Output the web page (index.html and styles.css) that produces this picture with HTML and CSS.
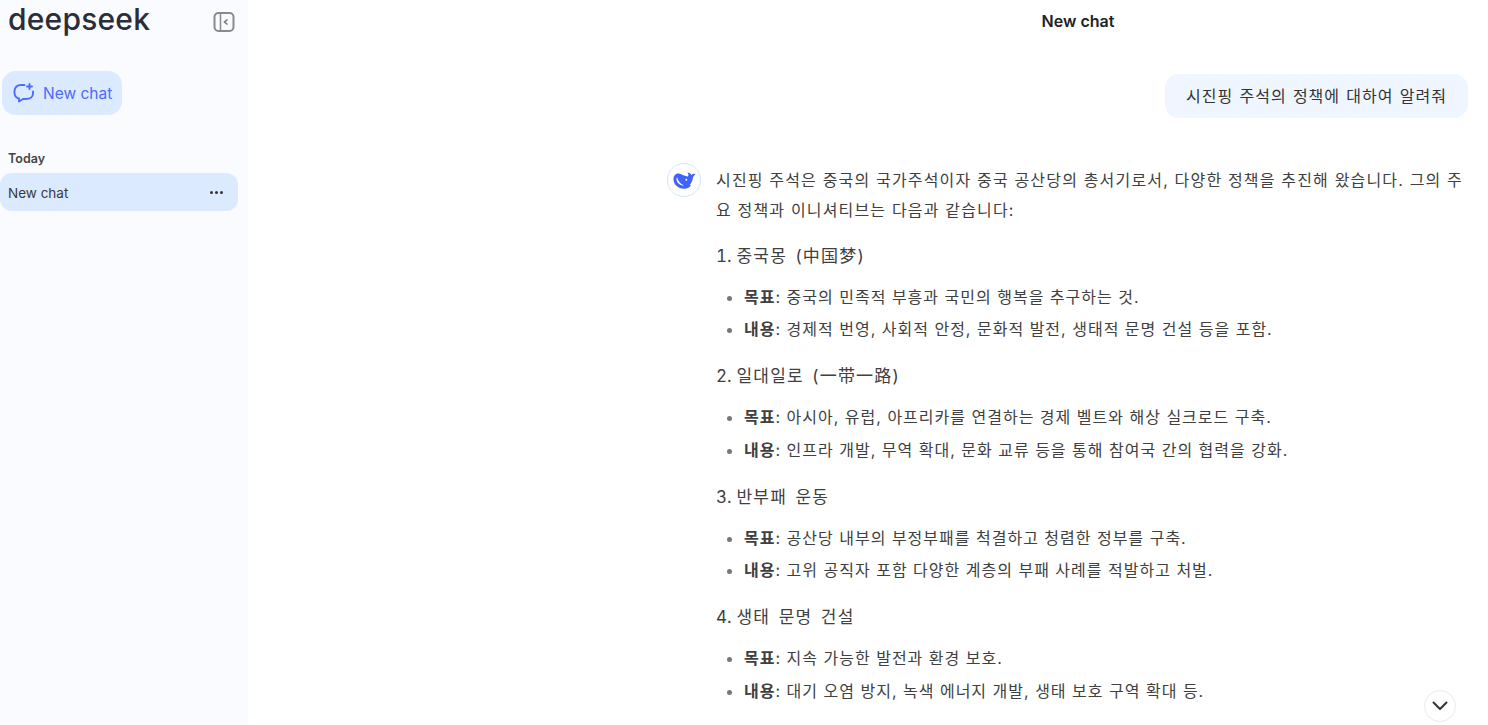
FILE: index.html
```html
<!DOCTYPE html>
<html lang="ko">
<head>
    <meta charset="UTF-8">
    <meta name="viewport" content="width=device-width, initial-scale=1.0">
    <title>DeepSeek - New chat</title>
    <link rel="stylesheet" href="styles.css">
</head>
<body>
    <div class="app">
        <aside class="sidebar">
            <div class="sidebar-top">
                <span class="logo">deepseek</span>
                <svg class="collapse-icon" width="22" height="22" viewBox="0 0 22 22" fill="none" stroke="#8a8a8e" stroke-width="2">
                    <rect x="1.5" y="2" width="19" height="18" rx="4"/>
                    <path d="M7.5 2v18" stroke-width="1.5"/>
                    <path d="M14.5 8.5L11.5 11l3 2.5" stroke-width="1.6" stroke="#77777b"/>
                </svg>
            </div>
            <button class="new-chat">
                <svg width="22" height="22" viewBox="0 0 22 22" fill="none" stroke="#4d6bfe" stroke-width="1.9" stroke-linecap="round" stroke-linejoin="round">
                    <path d="M11.500 3H8C4 3 1.500 5.500 1.500 9v1.500C1.500 14 3.500 16 6 16.500v3l4-2.500h3c4 0 7-2 7-5.500v-2"/>
                    <path d="M16.500 2v5M14 4.500h5"/>
                </svg>
                <span>New chat</span>
            </button>
            <div class="history-label">Today</div>
            <div class="history-item">
                <span>New chat</span>
                <span class="dots"><i></i><i></i><i></i></span>
            </div>
        </aside>
        <main class="main">
            <header class="chat-title">New chat</header>
            <div class="thread">
                <div class="user-row">
                    <div class="user-bubble">시진핑 주석의 정책에 대하여 알려줘</div>
                </div>
                <div class="answer">
                    <div class="avatar">
                        <svg width="23" height="17" viewBox="0 0 23 17">
                            <path fill="#3f62fb" d="M.5 7C.5 3.500 3 1 6 1.500c3 .5 5.500 3 9 3 .8-1.400.4-2.800-.6-4 2 .2 3.400 1.200 4 2.400 1-.8 2.400-1.200 4.100-1-.9 1-1.800 1.900-2.400 3.100-.3 4-2.500 7.200-3.600 8.300h1.800C16.500 15.800 14 16.700 11 16.700 4.800 16.700.5 12.300.5 7z"/>
                            <path fill="#fff" d="M4.200 5.500c.6 3.200 3 6.300 6.800 8-3.200.4-6.400-2.200-7.300-5-.4-1.400-.1-3.400.5-3z"/>
                            <circle fill="#fff" cx="13.300" cy="7.800" r="1"/>
                        </svg>
                    </div>
                    <div class="answer-body">
                        <p class="intro">시진핑 주석은 중국의 국가주석이자 중국 공산당의 총서기로서, 다양한 정책을 추진해 왔습니다. 그의 주요 정책과 이니셔티브는 다음과 같습니다:</p>

                        <h3><span class="num">1. </span>중국몽 (中国梦)</h3>
                        <ul>
                            <li><b>목표</b>: 중국의 민족적 부흥과 국민의 행복을 추구하는 것.</li>
                            <li><b>내용</b>: 경제적 번영, 사회적 안정, 문화적 발전, 생태적 문명 건설 등을 포함.</li>
                        </ul>

                        <h3><span class="num">2. </span>일대일로 (一带一路)</h3>
                        <ul>
                            <li><b>목표</b>: 아시아, 유럽, 아프리카를 연결하는 경제 벨트와 해상 실크로드 구축.</li>
                            <li><b>내용</b>: 인프라 개발, 무역 확대, 문화 교류 등을 통해 참여국 간의 협력을 강화.</li>
                        </ul>

                        <h3><span class="num">3. </span>반부패 운동</h3>
                        <ul>
                            <li><b>목표</b>: 공산당 내부의 부정부패를 척결하고 청렴한 정부를 구축.</li>
                            <li><b>내용</b>: 고위 공직자 포함 다양한 계층의 부패 사례를 적발하고 처벌.</li>
                        </ul>

                        <h3><span class="num">4. </span>생태 문명 건설</h3>
                        <ul>
                            <li><b>목표</b>: 지속 가능한 발전과 환경 보호.</li>
                            <li><b>내용</b>: 대기 오염 방지, 녹색 에너지 개발, 생태 보호 구역 확대 등.</li>
                        </ul>
                    </div>
                </div>
            </div>
            <button class="scroll-down">
                <svg width="16" height="10" viewBox="0 0 16 10" fill="none" stroke="#333" stroke-width="2" stroke-linecap="round" stroke-linejoin="round">
                    <path d="M1.500 1.500L8 8l6.500-6.500"/>
                </svg>
            </button>
        </main>
    </div>
</body>
</html>
```

FILE: styles.css
```css
* {
    box-sizing: border-box;
}
html, body {
    height: 100%;
}
body {
    margin: 0;
    overflow: hidden;
    background: #fff;
    color: #404040;
    font-family: Inter, "Noto Sans CJK KR", sans-serif;
    font-size: 14.5px;
}
.app {
    display: flex;
    height: 725px;
}

/* sidebar */
.sidebar {
    width: 248px;
    flex-shrink: 0;
    background: #f9fbff;
    padding: 0 10px 0 2px;
}
.sidebar-top {
    display: flex;
    justify-content: space-between;
    align-items: flex-start;
    height: 71px;
    padding: 1px 3px 0 6px;
}
.logo {
    font-size: 30px;
    line-height: 36px;
    font-weight: 500;
    letter-spacing: 0.2px;
    color: #2b2d38;
}
.collapse-icon {
    margin-top: 10px;
}
.new-chat {
    display: flex;
    align-items: center;
    gap: 8px;
    width: 120px;
    height: 44px;
    padding: 0 0 0 11px;
    border: none;
    border-radius: 14px;
    background: #dbeafe;
    color: #4d6bfe;
    font-family: inherit;
    font-size: 15.5px;
}
.history-label {
    margin: 36px 0 0 6px;
    font-size: 12.500px;
    font-weight: 600;
    line-height: 16px;
    color: #444;
}
.history-item {
    display: flex;
    justify-content: space-between;
    align-items: center;
    height: 38px;
    margin: 6px 0 0 -2px;
    padding: 1px 15px 0 8px;
    border-radius: 12px;
    background: #dbeafe;
    color: #3a3a3a;
    font-size: 13.500px;
}
.dots {
    display: flex;
    gap: 2px;
}
.dots i {
    width: 3px;
    height: 3px;
    border-radius: 50%;
    background: #333;
}

/* chat */
.main {
    flex: 1;
    position: relative;
    min-width: 0;
}
.chat-title {
    height: 43px;
    padding-left: 420px;
    line-height: 42px;
    text-align: center;
    font-size: 16px;
    font-weight: 600;
    color: #222;
}
.thread {
    padding: 31px 20px 0 419px;
}
.user-row {
    display: flex;
    justify-content: flex-end;
}
.user-bubble {
    height: 44px;
    line-height: 44px;
    padding: 0 21px;
    border-radius: 14px;
    background: #eff6ff;
    color: #333;
    font-size: 16px;
    letter-spacing: 1px;
    word-spacing: 0.8px;
}
.answer {
    display: flex;
    gap: 15px;
    margin-top: 47px;
}
.avatar {
    display: flex;
    justify-content: center;
    align-items: center;
    flex-shrink: 0;
    width: 34px;
    height: 34px;
    margin-top: -2px;
    border: 1px solid #d5e4ff;
    border-radius: 50%;
}
.answer-body {
    flex: 1;
    min-width: 0;
    font-size: 16px;
    line-height: 30px;
    letter-spacing: 1px;
}
.intro {
    margin: 0;
    letter-spacing: 1.17px;
}
h3 {
    margin: 16px 0 0;
    font-size: 17px;
    font-weight: 400;
    line-height: 30px;
    letter-spacing: 1.2px;
    word-spacing: 2.5px;
}
.num {
    letter-spacing: 0.1px;
    word-spacing: 0;
    font-variant-numeric: tabular-nums;
}
ul {
    margin: 10px 0 0;
    padding-left: 28px;
}
ul + h3 {
    margin-top: 15.600px;
}
ul li {
    height: 32.400px;
    line-height: 32px;
}
li::marker {
    color: #777;
}
b {
    font-weight: 700;
}
.scroll-down {
    position: absolute;
    right: 32px;
    bottom: 3px;
    display: flex;
    justify-content: center;
    align-items: center;
    width: 32px;
    height: 32px;
    padding: 0;
    border: 1px solid #ececec;
    border-radius: 50%;
    background: #fff;
}
```
